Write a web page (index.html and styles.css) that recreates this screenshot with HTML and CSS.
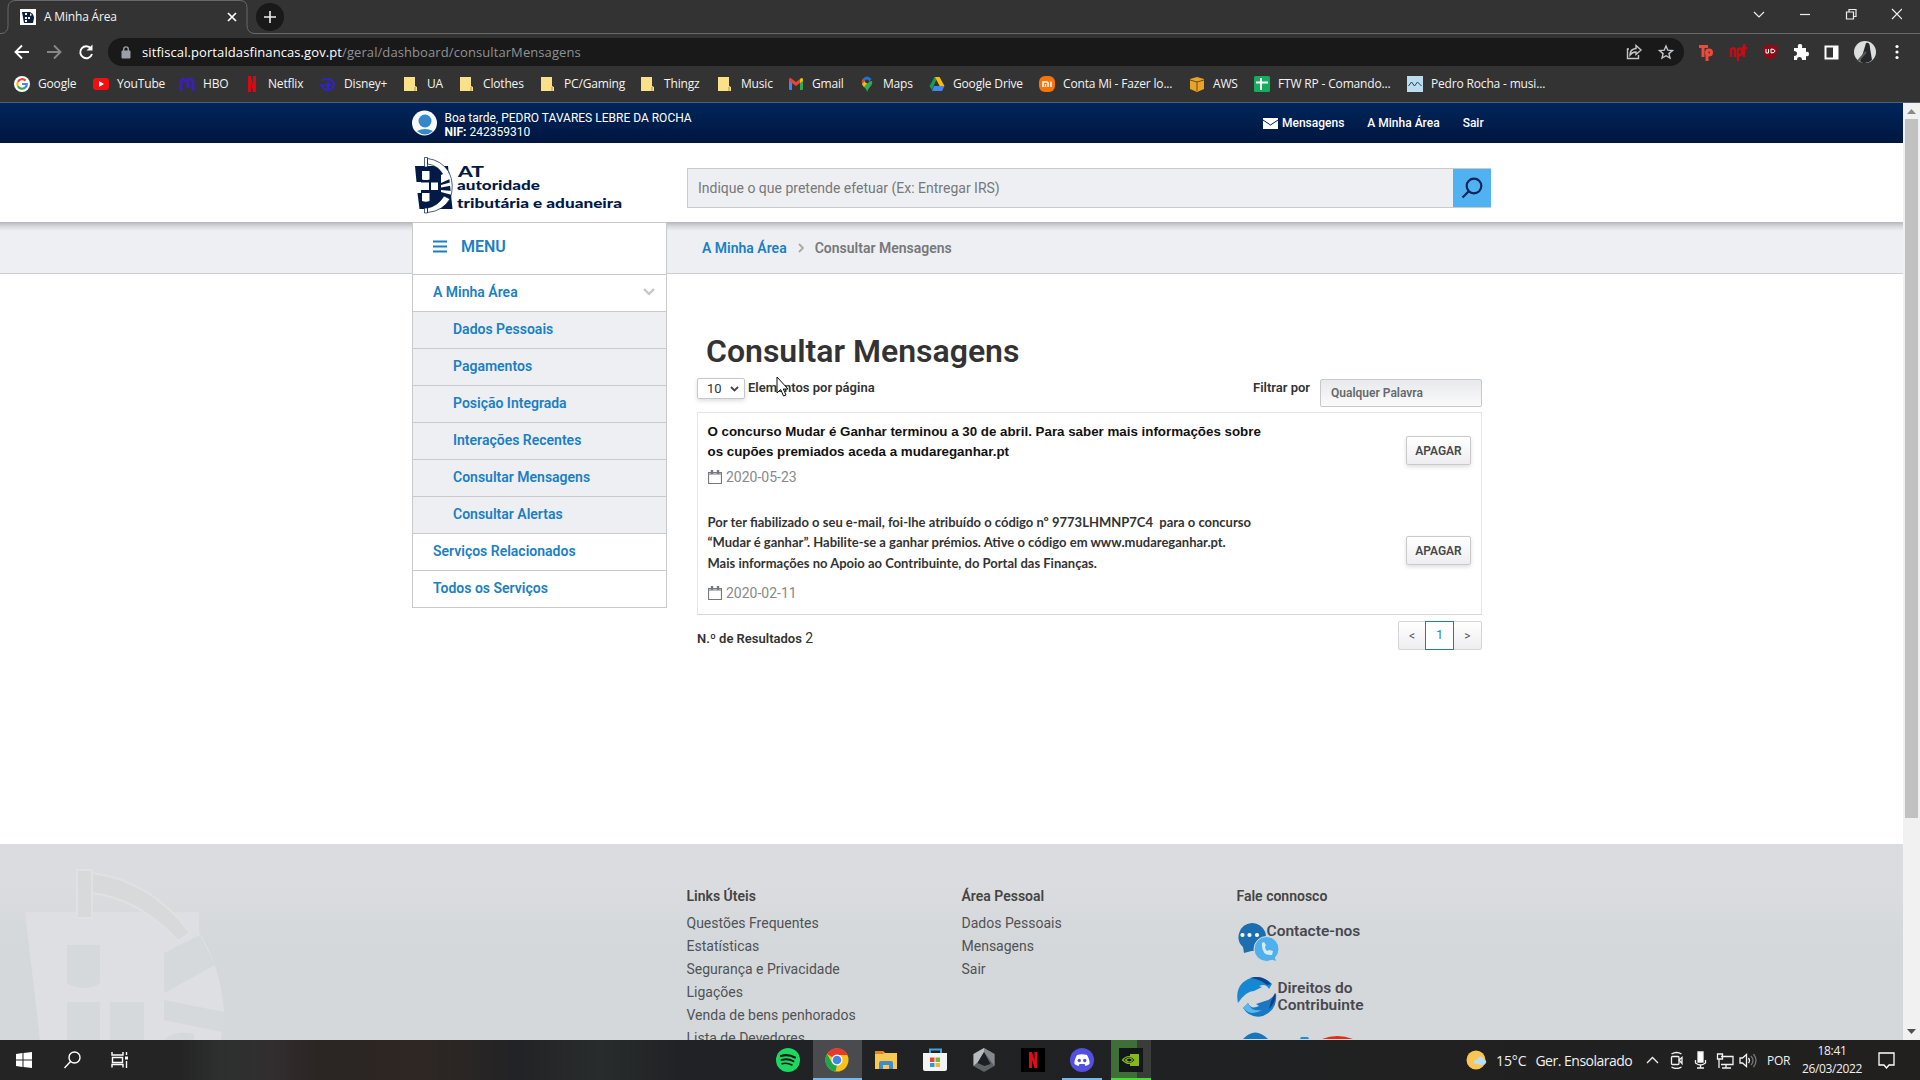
FILE: index.html
```html
<!DOCTYPE html>
<html lang="pt">
<head>
<meta charset="utf-8">
<title>A Minha Área</title>
<link rel="stylesheet" href="styles.css">
</head>
<body>
<div class="screen">
<header class="browser">
  <div class="tabstrip">
    <svg class="tab-shape" width="1920" height="35" viewBox="0 0 1920 35"><path d="M0 33.5h2q6-1 6-8V8q0-7 7-7.5h225q7 0 7 7v18q0 7 7 8H1920" fill="none" stroke="#66686b"/></svg>
    <svg class="favicon" width="16" height="16" viewBox="0 0 16 16"><path fill="#fff" d="M0 0h16v16H0z"/><path fill="#0b1f45" d="M2 3h8q4 2 4 6l-1 5H4z"/><path fill="#fff" d="M5 4h2v2H5zm0 4h2v2H5zm3 0h2v2H8zm-3 3h2v2H5zM10 4l2 2-2 1z"/></svg>
    <span class="tab-title">A Minha Área</span>
    <svg class="tab-close" width="10" height="10" viewBox="0 0 10 10"><path d="M1 1l8 8M9 1L1 9" stroke="#fff" stroke-width="1.7"/></svg>
    <span class="newtab"><svg width="12" height="12" viewBox="0 0 12 12"><path d="M6 0v12M0 6h12" stroke="#eee" stroke-width="1.6"/></svg></span>
    <span class="grow"></span>
    <svg class="winbtns" width="150" height="16" viewBox="0 0 150 16" fill="none" stroke="#eee" stroke-width="1.2"><path d="M2 6l5 5 5-5"/><path d="M48 8.5h10"/><path d="M94.5 6h7v7h-7zM97 6V3.500h7v7h-2.500"/><path d="M140 3l10 10M150 3l-10 10"/></svg>
  </div>
  <div class="toolbar">
    <svg class="nav" width="80" height="18" viewBox="0 0 80 18" fill="none" stroke-width="1.9"><path d="M15 9H2M8 2.500L1.500 9 8 15.500" stroke="#fff"/><path d="M33 9h13M40 2.500L46.500 9 40 15.500" stroke="#85888b"/><path d="M77 5.500A6 6 0 1 0 78 11" stroke="#fff"/><path d="M78.500 1.500v6h-6z" fill="#fff" stroke="none"/></svg>
    <div class="omnibox">
      <svg width="10" height="13" viewBox="0 0 10 13"><path d="M1 5h8v7H1z" fill="#9aa0a6" stroke="#9aa0a6"/><path d="M2.700 5V3.200a2.300 2.300 0 0 1 4.600 0V5" fill="none" stroke="#9aa0a6" stroke-width="1.4"/></svg>
      <span class="url"><b>sitfiscal.portaldasfinancas.gov.pt</b>/geral/dashboard/consultarMensagens</span>
      <svg width="48" height="16" viewBox="0 0 48 16" fill="none" stroke="#c4c7c9" stroke-width="1.4"><path d="M3 5H1.500v9.500h11V11M4 11q0-6 6-6.500V1.500l5 4.500-5 4.500V8q-4 0-6 3z"/><path d="M40 2l1.800 4.200 4.700.4-3.600 3 1.100 4.500L40 11.700l-4 2.400 1.100-4.500-3.600-3 4.700-.4z"/></svg>
    </div>
    <div class="exts">
      <svg width="16" height="18" viewBox="0 0 16 18" fill="none" stroke="#ee4a3a" stroke-width="3"><path d="M1 3.500h9M5 3v11"/><circle cx="11" cy="9.500" r="2.500"/><path d="M9 9v9"/></svg>
      <svg width="18" height="18" viewBox="0 0 18 18" fill="none" stroke="#c00d16" stroke-width="2.400"><path d="M2 14V6q4-2 4 1v7M9 18V6q5-1 4 3 0 4-4 3M15 1v13M13 5h5"/></svg>
      <svg width="16" height="18" viewBox="0 0 16 18"><path d="M8 1q3 2 7 2v6q-1 5-7 8Q2 14 1 9V3q4 0 7-2z" fill="#8d0c16"/><path d="M4 6v4h2.500V6M9 6v4q4 0 4-2t-4-2" fill="none" stroke="#fff"/></svg>
      <svg width="16" height="16" viewBox="0 0 16 16"><path fill="#fff" d="M1 4h4q-1-4 2-4t2 4h4v4q3-1 3 2t-3 2v4H9q0-3-2.500-3T4 16H1v-4q3 0 3-2.500T1 7z"/></svg>
      <svg width="15" height="15" viewBox="0 0 15 15"><path d="M1.500 1.500h12v12h-12z" fill="none" stroke="#fff" stroke-width="2"/><path fill="#fff" d="M9 1h5v13H9z"/></svg>
      <svg width="22" height="22" viewBox="0 0 22 22"><circle cx="11" cy="11" r="11" fill="#dcdedd"/><path d="M12 2q4-1 4 5l1 6 1 6q-3 3-7 3t-5-2l3-8z" fill="#25282a"/><path d="M4 20l8-9" stroke="#55595b" stroke-width="2" fill="none"/></svg>
      <svg class="kebab" width="4" height="16" viewBox="0 0 4 16" fill="#fff"><circle cx="2" cy="2.500" r="1.600"/><circle cx="2" cy="8" r="1.600"/><circle cx="2" cy="13.500" r="1.600"/></svg>
    </div>
  </div>
  <nav class="bookmarks">
    <a><svg viewBox="0 0 16 16"><circle cx="8" cy="8" r="8" fill="#fff"/><g fill="none" stroke-width="2.200"><path d="M11.500 4.600A4.800 4.800 0 0 0 3.900 5.700" stroke="#ea4335"/><path d="M3.900 5.700a4.800 4.800 0 0 0 0 4.600" stroke="#fbbc05"/><path d="M3.900 10.300a4.800 4.800 0 0 0 7.200 1.400" stroke="#34a853"/><path d="M11.100 11.700A4.800 4.800 0 0 0 12.800 8H8" stroke="#4285f4"/></g></svg>Google</a>
    <a><svg viewBox="0 0 16 16"><rect y="2" width="16" height="12" rx="3" fill="#f20f0f"/><path d="M6 5l5 3-5 3z" fill="#fff"/></svg>YouTube</a>
    <a><svg viewBox="0 0 16 16" fill="none" stroke="#3a20b8" stroke-width="3"><path d="M2 15V6q1-4 4-2 3 0 3 4v4M8 5q6-5 6 3v7"/></svg>HBO</a>
    <a><svg viewBox="0 0 16 16"><path d="M4 0h3l2 8V0h3v16H9L7 8v8H4z" fill="#d40a14"/></svg>Netflix</a>
    <a><svg viewBox="0 0 16 16" fill="none" stroke="#3223c4" stroke-width="2"><path d="M2 4q10-3 12 4 0 6-7 6-5-1-4-4 3-2 8-1M8 6v9M0 9l4 1"/></svg>Disney+</a>
    <a><svg viewBox="0 0 16 16"><path d="M1 1h11v9l2 1v4H1z" fill="#fbe08a"/><path d="M11 11h2v4h-2z" fill="#d9b95a"/></svg>UA</a>
    <a><svg viewBox="0 0 16 16"><path d="M1 1h11v9l2 1v4H1z" fill="#fbe08a"/><path d="M11 11h2v4h-2z" fill="#d9b95a"/></svg>Clothes</a>
    <a><svg viewBox="0 0 16 16"><path d="M1 1h11v9l2 1v4H1z" fill="#fbe08a"/><path d="M11 11h2v4h-2z" fill="#d9b95a"/></svg>PC/Gaming</a>
    <a><svg viewBox="0 0 16 16"><path d="M1 1h11v9l2 1v4H1z" fill="#fbe08a"/><path d="M11 11h2v4h-2z" fill="#d9b95a"/></svg>Thingz</a>
    <a><svg viewBox="0 0 16 16"><path d="M1 1h11v9l2 1v4H1z" fill="#fbe08a"/><path d="M11 11h2v4h-2z" fill="#d9b95a"/></svg>Music</a>
    <a><svg viewBox="0 0 16 16"><path fill="#4285f4" d="M1 5h3v9H2q-1 0-1-1z"/><path fill="#34a853" d="M12 5h3v8q0 1-1 1h-2z"/><path fill="#ea4335" d="M1 5V3q1-2 3 0l4 3 4-3v4L8 10 1 5z"/><path fill="#fbbc04" d="M12 3q2-2 3 0v2l-3 2z"/></svg>Gmail</a>
    <a><svg viewBox="0 0 16 16"><path fill="#34a853" d="M3 7q0 3 3 5 2 2 2 4 1-3 3-5 3-3 2-6z"/><path fill="#1a73e8" d="M3.500 3Q8-2 12.500 3L8 8z"/><path fill="#ea4335" d="M3.500 3L6 5 3 8q-1-3 .5-5z"/><path fill="#fbbc04" d="M3 8l5-5 2 2-5 6z"/><circle cx="8" cy="5.300" r="2" fill="#333"/></svg>Maps</a>
    <a><svg viewBox="0 0 16 16"><path fill="#0f9d58" d="M5.500 1h3L3 14 0.500 10z"/><path fill="#fbbc04" d="M6 1h4.500l5 9h-5z"/><path fill="#4285f4" d="M5 10h10.500L13 15H3z"/><path fill="#333" d="M8 6l2.500 4h-5z"/></svg>Google Drive</a>
    <a><svg viewBox="0 0 16 16"><rect width="16" height="16" rx="6" fill="#f6740b"/><path d="M4 11V6h4q1 0 1 1v4M6.500 8v3M12 5.500V11" fill="none" stroke="#fff" stroke-width="1.500"/></svg>Conta Mi - Fazer lo...</a>
    <a><svg viewBox="0 0 16 16"><path fill="#e9a427" d="M1 3l7-2 7 2v10l-7 3-7-3z"/><path d="M1 4l7 2 7-2M8 6v9" stroke="#6b4a17" fill="none"/></svg>AWS</a>
    <a><svg viewBox="0 0 16 16"><rect width="16" height="16" rx="1.500" fill="#14ad5b"/><path d="M7 2v12M2 6.500h12" stroke="#fff" stroke-width="2"/></svg>FTW RP - Comando...</a>
    <a><svg viewBox="0 0 16 16"><path fill="#bcdcf0" d="M0 0h16v16H0z"/><path d="M1.500 10l3-4 3 4 3-4 4 4" fill="none" stroke="#1f4468"/></svg>Pedro Rocha - musi...</a>
  </nav>
</header>

<div class="viewport">
<div class="page">
  <div class="userbar">
    <svg class="avatar" width="26" height="26" viewBox="0 0 26 26"><circle cx="12.500" cy="13" r="12.500" fill="#f6fafc"/><circle cx="13" cy="11" r="6.500" fill="#3487c9"/><path d="M5 21q8-4 16 0-8 7-16 0z" fill="#3487c9"/></svg>
    <div class="who">Boa tarde, PEDRO TAVARES LEBRE DA ROCHA<br><b>NIF:</b> 242359310</div>
    <div class="userlinks">
      <a><svg width="15" height="11" viewBox="0 0 15 11"><path fill="#fff" d="M0 0h15v11H0z"/><path d="M0 2l7.500 5L15 2" fill="none" stroke="#001d4c"/></svg>Mensagens</a><a>A Minha Área</a><a>Sair</a>
    </div>
  </div>
  <div class="masthead">
    <svg class="logo" width="212" height="60" viewBox="0 0 212 60">
      <path fill="#021a45" d="M2 10h33l4.500 43H6.500L4.500 37H8V26H3.500z"/>
      <path fill="#fff" d="M9 15h7.500v8.500q-3.500 1-7.500 0zM8 26.500h8v7.500H8zM18 26.500h7v7.500h-7zM9 37h7.500v8q-3.500 1.500-7.500 0z"/>
      <path fill="#fff" stroke="#021a45" stroke-width=".7" d="M11.500 1.500h3V11h-3zM14.500 2.500Q28 4 36 16l-5 4Q25 9 14.500 8zM11.500 52h3v5h-3zM14.500 56.500Q30 55 37 43l-6-3Q25 50 14.500 52z"/>
      <path fill="#fff" d="M28 19l7-3.500 3 7-10 4.500zM28 29l11-3v3.500l-11 2zM28 34l11 1v4l-11-3z"/>
      <path d="M36 16q6 13 1 27" fill="none" stroke="#021a45" stroke-width=".7"/>
      <g fill="#021a45" class="logo-text"><text x="45" y="21" font-size="15.500" textLength="26" lengthAdjust="spacingAndGlyphs">AT</text><text x="44" y="34" font-size="14" textLength="83" lengthAdjust="spacingAndGlyphs">autoridade</text><text x="44" y="52" font-size="14" textLength="165" lengthAdjust="spacingAndGlyphs">tributária e aduaneira</text></g>
    </svg>
    <div class="search"><span>Indique o que pretende efetuar (Ex: Entregar IRS)</span>
      <i><svg width="22" height="22" viewBox="0 0 22 22" fill="none" stroke="#08245a" stroke-width="2.200"><circle cx="13" cy="9" r="7.300"/><path d="M7.800 14.200L1.500 20.500"/></svg></i></div>
  </div>
  <div class="band">
    <div class="menuhead"><svg width="14" height="13" viewBox="0 0 14 13"><path d="M0 1.500h14M0 6.500h14M0 11.500h14" stroke="#1b7fc4" stroke-width="1.800"/></svg>MENU</div>
    <div class="crumbs"><a>A Minha Área</a><svg width="6" height="10" viewBox="0 0 6 10"><path d="M1 1l4 4-4 4" fill="none" stroke="#a8a8a8" stroke-width="1.800"/></svg><span>Consultar Mensagens</span></div>
  </div>
  <div class="body">
    <nav class="side">
      <a class="open">A Minha Área<svg width="12" height="8" viewBox="0 0 12 8"><path d="M1 1l5 5 5-5" fill="none" stroke="#c3c5c7" stroke-width="2.200"/></svg></a>
      <a class="sub">Dados Pessoais</a><a class="sub">Pagamentos</a><a class="sub">Posição Integrada</a><a class="sub">Interações Recentes</a><a class="sub">Consultar Mensagens</a><a class="sub">Consultar Alertas</a>
      <a>Serviços Relacionados</a><a>Todos os Serviços</a>
    </nav>
    <main>
      <h1>Consultar Mensagens</h1>
      <div class="controls">
        <span class="select">10<svg width="9" height="6" viewBox="0 0 9 6"><path d="M1 1l3.500 3.500L8 1" fill="none" stroke="#444" stroke-width="1.800"/></svg></span>
        <b class="per">Elementos por página</b>
        <b class="filt">Filtrar por</b><span class="filter">Qualquer Palavra</span>
      </div>
      <section class="list">
        <article>
          <div class="msg"><p class="m1">O concurso Mudar é Ganhar terminou a 30 de abril. Para saber mais informações sobre<br>os cupões premiados aceda a mudareganhar.pt</p>
          <div class="date"><svg width="14" height="14" viewBox="0 0 14 14" fill="none" stroke="#77797e"><path d="M.5 2.500h13v11H.5zM.5 4h13" stroke-width="1.200"/><path d="M4 0v4M10 0v4" stroke-width="2.400"/></svg>2020-05-23</div></div>
          <button>APAGAR</button>
        </article>
        <article class="second">
          <div class="msg"><p class="m2">Por ter fiabilizado o seu e-mail, foi-lhe atribuído o código nº 9773LHMNP7C4&nbsp; para o concurso<br>“Mudar é ganhar”. Habilite-se a ganhar prémios. Ative o código em www.mudareganhar.pt.<br>Mais informações no Apoio ao Contribuinte, do Portal das Finanças.</p>
          <div class="date"><svg width="14" height="14" viewBox="0 0 14 14" fill="none" stroke="#77797e"><path d="M.5 2.500h13v11H.5zM.5 4h13" stroke-width="1.200"/><path d="M4 0v4M10 0v4" stroke-width="2.400"/></svg>2020-02-11</div></div>
          <button>APAGAR</button>
        </article>
      </section>
      <div class="results"><span><b>N.º de Resultados</b> 2</span><div class="pager"><i>&lt;</i><i class="cur">1</i><i>&gt;</i></div></div>
    </main>
  </div>
  <footer>
    <svg class="mark" width="230" height="196" viewBox="0 844 230 196">
      <path fill="#dedfe2" d="M25 912h174v20q22 35 25 80l-3 28H40z"/>
      <path fill="#d7d9db" stroke="#e0e1e4" stroke-width="2" d="M92 873q60 8 98 60l-12 8q-38-42-86-48zM77 870h15v48H77z"/>
      <g fill="#d5d9db"><path d="M67 945h33v38q-6 5-17 5-11-1-16-5zM67 1002h33v38H67zM110 1002h34v38h-34zM164 953l36-18 15 30-51 28zM164 1000l60 12-2 20-58-12zM164 1040q10-10 30-6v6z"/></g>
    </svg>
    <div class="col"><h4>Links Úteis</h4><a>Questões Frequentes</a><a>Estatísticas</a><a>Segurança e Privacidade</a><a>Ligações</a><a>Venda de bens penhorados</a><a>Lista de Devedores</a></div>
    <div class="col"><h4>Área Pessoal</h4><a>Dados Pessoais</a><a>Mensagens</a><a>Sair</a></div>
    <div class="col"><h4>Fale connosco</h4>
      <div class="contact"><svg width="43" height="39" viewBox="0 0 43 39"><path d="M14.500 0a14.500 14 0 0 1 0 28L7 30l-1-6A14.500 14 0 0 1 14.500 0z" fill="#1b6fb0"/><g fill="#fff"><circle cx="5.500" cy="12" r="2.100"/><circle cx="12.500" cy="12" r="2.100"/><circle cx="20" cy="12" r="2.100"/></g><circle cx="29.500" cy="26" r="12.500" fill="#50b0ec" stroke="#d8dcdf"/><path d="M33 36l6 2-2-6z" fill="#50b0ec"/><path d="M25 20q-1 13 10 12l1-4-4-1-2 1q-2-2-2-4l1-2-2-3z" fill="#d6eaf6"/></svg><b>Contacte-nos</b></div>
      <div class="contact rights"><svg width="40" height="40" viewBox="0 0 40 40"><path d="M1 26Q-3 7 14 1q13-3 21 6l-3 5q-3-6-10-3l3 1-8 4q-8 0-16 12z" fill="#1688d2"/><path d="M39 16q2 17-13 23-13 3-20-8l5-5q3 7 11 3l-3-2 9-3q6-1 11-8z" fill="#1a78c2"/><path d="M13 1q12-4 21 6l-4 1Q23 2 13 1zM38 16q2 8-6 16l2-8z" fill="#10428a"/><path d="M6 31q3-3 5-5 3 9 14 7-11 7-19-2z" fill="#54b9ef"/></svg><b>Direitos do<br>Contribuinte</b></div>
      <svg class="peek" width="120" height="8" viewBox="0 0 120 8"><path d="M6 8Q18-5 31 8z" fill="#1476be"/><path d="M63 8l1-2h7l1 2z" fill="#1b8fd6"/><path d="M85 8q15-6 31 0z" fill="#e52a17"/></svg>
    </div>
  </footer>
</div>
<div class="scrollbar"><svg width="9" height="5" viewBox="0 0 9 5"><path fill="#8a8a8a" d="M4.500 0L9 5H0z"/></svg><i></i><span class="grow"></span><svg width="9" height="5" viewBox="0 0 9 5"><path fill="#505050" d="M0 0h9L4.500 5z"/></svg></div>
</div>

<div class="taskbar">
  <svg width="140" height="40" viewBox="0 0 140 40"><path fill="#fff" d="M16 14l6.500-1v6.500H16zM23.500 13l8.500-1v7.500h-8.500zM16 20.500h6.500V27L16 26zM23.500 20.500H32V28l-8.500-1z"/><g fill="none" stroke="#fff" stroke-width="1.400"><circle cx="74.500" cy="17.500" r="5.500"/><path d="M70.500 21.500L64.500 28"/><path d="M112 12v3h11v-3M112 27.500v-3h11v3M112.500 17.500h10v5h-10zM126.500 12v3M126.500 21v7"/></g><path fill="#fff" d="M125 16.500h3v3h-3z"/></svg>
  <div class="apps">
    <i><svg viewBox="0 0 24 24"><circle cx="12" cy="12" r="12" fill="#1ed760"/><g fill="none" stroke="#191414" stroke-linecap="round"><path d="M5 8q7-2.500 14 1.500" stroke-width="2.200"/><path d="M5.500 12q6.500-2 12 1.300" stroke-width="1.900"/><path d="M6 15.800q5-1.500 10 1.200" stroke-width="1.500"/></g></svg></i>
    <i class="active"><svg viewBox="0 0 24 24"><circle cx="12" cy="12" r="11.500" fill="#fbc116"/><path d="M12 12L2 6a11.500 11.500 0 0 1 20.500 1H12z" fill="#e33b2e"/><path d="M2 6l5.500 9.500L12 17l-1.500 6.500A11.500 11.500 0 0 1 2 6z" fill="#1fa54d"/><circle cx="12" cy="12" r="5.500" fill="#fff"/><circle cx="12" cy="12" r="4.300" fill="#3f86e8"/></svg></i>
    <i><svg viewBox="0 0 24 24"><path d="M1 3h8l2 2h12v16H1z" fill="#f9c851"/><path d="M1 3h8l1 3H1z" fill="#e8821d"/><path d="M5 21v-6q0-2 2-2h10q2 0 2 2v6h-4v-4H9v4z" fill="#3f8bd0"/></svg></i>
    <i><svg viewBox="0 0 24 24"><path d="M7 5V1.500h11V5" fill="none" stroke="#3fa7e0" stroke-width="2"/><path d="M0 5h24v16q0 2-2 2H2q-2 0-2-2z" fill="#f4f4f4"/><path fill="#e7472e" d="M7 9.500h4.500V14H7z"/><path fill="#7cb632" d="M12.500 9.500H17V14h-4.500z"/><path fill="#2a9ad9" d="M7 15h4.500v4H7z"/><path fill="#f8b62b" d="M12.500 15H17v4h-4.500z"/></svg></i>
    <i><svg viewBox="0 0 24 24"><path d="M12 0l10.500 6v12L12 24 1.500 18V6z" fill="#5d6266"/><path d="M12 0l10.500 6v12L12 4z" fill="#85898d"/><path d="M12 4L6 14l-4.500 4V6L12 0z" fill="#b9bcbf"/><path d="M12 4l6.500 12-6 2L5.500 15z" fill="#1d2023"/></svg></i>
    <i><svg viewBox="0 0 24 24"><path d="M0 0h24v24H0z"/><path d="M8 4h3l2.500 8V4H16v16h-2.500L11 12v8H8z" fill="#e20a17"/></svg></i>
    <i class="running"><svg viewBox="0 0 24 24"><circle cx="12" cy="12" r="12" fill="#5250e0"/><path d="M7 7q5-1.500 10 0 3 5 2.500 9-2 1.500-4 2l-1-2h-5l-1 2q-2-.5-4-2Q4 12 7 7z" fill="#fff"/><circle cx="9.300" cy="12.500" r="1.700" fill="#5250e0"/><circle cx="14.700" cy="12.500" r="1.700" fill="#5250e0"/></svg></i>
    <i class="nv"><svg viewBox="0 0 24 24"><path fill="#14171a" d="M0 0h24v24H0z"/><path fill="#86b81b" d="M11 6h9v12h-9z"/><path d="M3.500 12q6-7 13 0-6 7-13 0z" fill="#14171a" stroke="#86b81b" stroke-width="1.200"/><path d="M6.500 12q4-4 7 0-3 4-7 0z" fill="#14171a" stroke="#86b81b" stroke-width="1.200"/></svg></i>
  </div>
  <div class="tray">
    <svg width="22" height="20" viewBox="0 0 22 20"><circle cx="10" cy="10" r="9.500" fill="#f9c653"/><path d="M11 14q-4 0-3-3 1-2 3-1 1-4 5-3 2 1 2 3 3 0 2 3-1 2-4 2z" fill="#b9def5"/></svg>
    <span class="weather"><span>15°C</span><span class="sky">Ger. Ensolarado</span></span>
    <svg width="112" height="18" viewBox="0 0 112 18" fill="none" stroke="#f2f2f2" stroke-width="1.300"><path d="M2 12l5.500-5.500L13 12"/><path d="M26.500 3q5-3 10 0M26.500 16q5 3 10 0"/><rect x="26.500" y="5.500" width="7.500" height="8" rx="1"/><path d="M34 9l3-2.500v6z"/><path d="M53 1h5v10h-5z" fill="#fff"/><path d="M50.500 9v3q5 4 10 0V9M55.500 14v3M52 17h7"/><path d="M76 5.500h12v8H76M81 13.500V17M77 17h9M72.500 3h5v5h-5zM74 8v9"/><path d="M95 7h2.500l4-3.500v12l-4-3.500H95z"/><path d="M103.500 7q2 2.500 0 5"/><path d="M106 5q4 4.500 0 9M108.500 3q5 6.500 0 13" stroke="#777"/></svg>
    <span class="lang">POR</span>
    <span class="clock"><span>18:41</span><span>26/03/2022</span></span>
    <svg width="17" height="17" viewBox="0 0 17 17"><path d="M1 1h15v12h-5l-2.500 3L6 13H1z" fill="none" stroke="#fff" stroke-width="1.300"/></svg>
  </div>
</div>
<svg class="cursor" width="13" height="21" viewBox="0 0 13 21"><path d="M1 1v16l3.700-3.500L7.500 20l2.500-1-2.700-6h4.700z" fill="#fff" stroke="#111"/></svg>
</div>
</body>
</html>
```
FILE: styles.css
```css
* { box-sizing: border-box; }
body { margin: 0; background: #fff; font-family: Roboto, sans-serif; }
svg { display: block; flex: none; }
i { font-style: normal; }
.screen { position: relative; width: 1920px; height: 1080px; overflow: hidden; display: flex; flex-direction: column; }
.grow { flex: 1; }

.browser { height: 103px; flex: none; background: #333; border-bottom: 1px solid #555d70; color: #f4f4f4; font: 12px "Open Sans", sans-serif; }
.tabstrip { position: relative; height: 34px; display: flex; align-items: center; padding: 0 18px 0 20px; }
.tab-shape { position: absolute; left: 0; top: 0; }
.tab-title { width: 183px; padding: 0 0 1px 8px; letter-spacing: -.18px; }
.tab-close { margin-left: 8px; }
.newtab { width: 28px; height: 28px; margin-left: 19px; border-radius: 50%; background: #191919; display: flex; align-items: center; justify-content: center; }
.winbtns { margin-bottom: 7px; }
.toolbar { height: 36px; display: flex; align-items: center; padding-left: 14px; }
.omnibox { width: 1576px; height: 28px; margin-left: 14px; border-radius: 14px; background: #191919; display: flex; align-items: center; padding: 0 10px 0 13px; }
.url { flex: 1; padding-left: 11px; font-size: 13px; letter-spacing: .09px; color: #8f9295; white-space: nowrap; }
.url b { font-weight: 400; color: #fff; }
.exts { display: flex; align-items: center; gap: 15px; padding-left: 14px; }
.kebab { margin-left: 4px; }
.bookmarks { height: 27px; display: grid; align-items: center; padding-left: 14px; grid-template-columns: 79px 86px 65px 76px 83px 56px 81px 100px 77px 71px 71px 70px 110px 150px 65px 153px 150px; letter-spacing: -.17px; }
.bookmarks a { display: flex; align-items: center; gap: 8px; white-space: nowrap; }
.bookmarks svg { width: 16px; height: 16px; }

.viewport { height: 937px; flex: none; display: flex; overflow: hidden; }
.page { width: 1903px; height: 937px; overflow: hidden; }
.userbar { height: 40px; padding-left: 412px; display: flex; align-items: center; color: #fff; font-size: 12px; background: linear-gradient(#00255a, #00163f); }
.who { width: 819px; padding-left: 6.500px; line-height: 14px; padding-top: 3px; }
.userlinks { display: flex; gap: 23px; font-weight: 500; padding-left: 6px; }
.userlinks a { display: flex; align-items: center; gap: 4px; }
.avatar { margin-bottom: 1px; }
.masthead { height: 79px; padding-left: 413px; display: flex; align-items: flex-start; }
.logo { margin-top: 13px; }
.logo-text { font-family: Lato, sans-serif; font-weight: 900; }
.search { width: 804px; height: 40px; margin: 25px 0 0 62px; display: flex; align-items: center; border: 1px solid #c8cacd; border-right: 0; background: #eeeff2; color: #76787b; font-size: 14px; }
.search span { flex: 1; padding-left: 10px; }
.search i { width: 38px; height: 38px; background: #50b2f0; display: flex; align-items: center; justify-content: center; }
.band { height: 52px; padding-left: 412px; display: flex; align-items: flex-start; border-bottom: 1px solid #ccced0; background: linear-gradient(#b6b7ba, #dbdcdf 5px, #eeeff2 9px); }
.menuhead { width: 255px; height: 53px; padding: 0 0 4px 20px; display: flex; align-items: center; gap: 14px; background: #fff; border: 1px solid #c8cacc; color: #1b7fc4; font-size: 16px; font-weight: 600; }
.crumbs { height: 52px; display: flex; align-items: center; gap: 11px; padding-left: 35px; color: #76787b; font-size: 14px; font-weight: 600; }
.crumbs a { color: #1b7fc4; }
.body { height: 570px; padding-left: 412px; display: flex; align-items: flex-start; }
.side { width: 255px; margin-top: 1px; border: 1px solid #c8cacc; border-top: 0; }
.side a { height: 37px; padding: 0 11px 2px 20px; display: flex; align-items: center; justify-content: space-between; border-bottom: 1px solid #c8cacc; color: #1b7fc4; font-size: 14px; font-weight: 600; }
.side a:last-child { height: 36px; border: 0; }
.side .sub { padding-left: 40px; background: #eeeff2; }
main { width: 785px; margin-left: 30px; color: #333; }
h1 { margin: 58px 0 0 9px; height: 38px; font-size: 32px; line-height: 38px; font-weight: 600; white-space: nowrap; }
.controls { height: 42px; padding-top: 8px; display: flex; align-items: flex-start; font-size: 13px; }
.controls b { font-weight: 600; line-height: 18px; padding-top: 1px; }
.select { width: 48px; height: 21px; padding: 0 5px 0 9px; display: flex; align-items: center; justify-content: space-between; border: 1px solid #c6c8ca; border-radius: 2px; box-shadow: 0 2px 4px #0002; }
.controls .per { padding-left: 3px; flex: 1; }
.controls .filt { padding-right: 10px; }
.filter { width: 162px; height: 28px; margin-top: 1px; padding-left: 10px; line-height: 27px; border: 1px solid #c6c8ca; border-radius: 2px; background: linear-gradient(#e8e9eb, #fafafb); font-size: 12px; font-weight: 600; color: #66696c; }
.list { height: 203px; border: 1px solid #e4e5e7; border-bottom-color: #d5d6d8; }
article { height: 90px; padding: 9px 10px 0 9.500px; display: flex; justify-content: space-between; align-items: flex-start; }
.second { height: 112px; }
article p { margin: 0; line-height: 20.300px; white-space: nowrap; }
.m1 { font-family: "Liberation Sans", sans-serif; font-size: 13.333px; font-weight: 700; color: #111; }
.m2 { font-family: Lato, sans-serif; font-size: 13px; font-weight: 700; }
.date { display: flex; align-items: center; gap: 4.500px; margin-top: 6px; font-size: 14px; line-height: 16px; color: #88898c; }
.second .date { margin-top: 12px; }
button { width: 65px; height: 29px; margin-top: 14px; padding: 0; border: 1px solid #c8cacc; border-radius: 2px; background: linear-gradient(#fff, #eeeef1); box-shadow: 0 2px 4px #0002; color: #48494b; font: 600 12px Roboto, sans-serif; }
.second button { margin-top: 24px; }
.results { display: flex; justify-content: space-between; padding-top: 6px; font-size: 13px; line-height: 34px; }
.results span { font-size: 14px; }
.results span b { font-size: 13px; font-weight: 600; }
.pager { display: flex; height: 29px; border: 1px solid #d4d5d8; border-radius: 2px; background: linear-gradient(#fff, #eeeef1); font-size: 12px; line-height: 28px; text-align: center; color: #55585b; }
.pager i { width: 27px; }
.pager i:first-child { width: 26px; }
.pager .cur { width: 29px; height: 29px; margin-top: -1px; border: 1px solid #1b7fb5; background: #fff; color: #1b7fb5; line-height: 26px; }
footer { position: relative; height: 196px; padding: 40px 0 0 686.500px; display: flex; background: linear-gradient(#dbdcdf 40px, #d4d8da 100px, #d4d8da); font-size: 14px; color: #505255; overflow: hidden; }
.mark { position: absolute; left: 0; top: 0; }
.col { position: relative; width: 275px; display: flex; flex-direction: column; }
h4 { margin: 0 0 4px; height: 24px; line-height: 25px; font-size: 14px; font-weight: 600; color: #444; }
.col a { line-height: 23px; height: 23px; }
.contact { display: flex; height: 39px; margin-top: 11px; font-size: 15.500px; line-height: 17px; color: #48494f; }
.contact b { font-weight: 600; margin-left: -13px; }
.rights { margin: 15px 0 0; height: 40px; }
.rights b { margin: 3px 0 0 1px; }
.peek { margin-top: 14px; }
.scrollbar { width: 17px; background: #f1f1f1; display: flex; flex-direction: column; align-items: center; padding: 6px 0; }
.scrollbar i { width: 13px; height: 699px; margin-top: 5px; background: #c1c1c1; }

.taskbar { height: 40px; flex: none; background: linear-gradient(90deg, #242424, #242424 180px, #2d302f 220px, #322e30 270px, #2b2523 320px, #2e2723 430px, #222326 520px, #292c2c 600px, #202225 680px, #21201f); color: #f0f0f0; display: flex; }
.apps { display: flex; margin-left: 623.500px; }
.apps i { width: 49px; height: 40px; display: flex; align-items: center; justify-content: center; }
.apps svg { width: 24px; height: 24px; }
.apps .active { background: #4a4b4f; border-bottom: 2px solid #76b9ed; padding-top: 2px; }
.apps .running { background: linear-gradient(#76b9ed, #76b9ed) center bottom / 40px 2px no-repeat; }
.apps .nv { width: 40px; margin-left: 4px; background: linear-gradient(#48e030, #48e030) center bottom / 40px 2px no-repeat, linear-gradient(90deg, #3f6e36 26px, #3a3c3a 26px); }
.tray { margin-left: auto; padding-right: 25px; display: flex; align-items: center; font-family: "Open Sans", sans-serif; }
.weather { display: flex; gap: 9px; padding-left: 8px; width: 141px; font-size: 14px; letter-spacing: -.1px; white-space: nowrap; }
.sky { letter-spacing: -.5px; }
.tray > svg:nth-of-type(2) { margin-left: 16px; }
.lang { margin-left: 10px; font-size: 12px; width: 24px; letter-spacing: -.3px; }
.clock { width: 60px; margin: 0 16px 0 11px; display: flex; flex-direction: column; align-items: center; font-size: 12px; line-height: 18px; letter-spacing: -.35px; }
.cursor { position: absolute; left: 776px; top: 376px; }
```
